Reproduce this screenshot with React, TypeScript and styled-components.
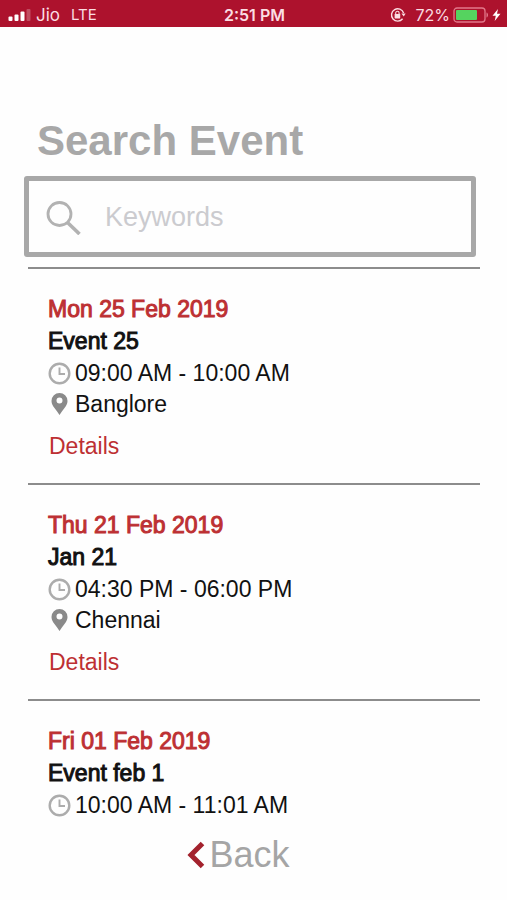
import React from "react";
import styled, { createGlobalStyle } from "styled-components";

const GlobalStyle = createGlobalStyle`
  * { box-sizing: border-box; }
  body {
    margin: 0;
    background: #fefefe;
    color: #111111;
    font-family: "Liberation Sans", Arial, Helvetica, sans-serif;
  }
`;

const Screen = styled.div`
  display: flex;
  flex-direction: column;
  height: 100vh;
`;

const StatusBar = styled.header`
  display: grid;
  grid-template-columns: 1fr auto 1fr;
  align-items: center;
  flex: none;
  height: 27px;
  padding: 2px 6px 0 8px;
  background: #ad122d;
  color: #fbdde2;
  font-family: Inter, sans-serif;
  font-size: 16px;
  line-height: 24px;
`;

const StatusGroup = styled.div<{ $end?: boolean }>`
  display: flex;
  align-items: center;
  justify-content: ${(p) => (p.$end ? "flex-end" : "flex-start")};
  gap: ${(p) => (p.$end ? "3px" : "4px")};
`;

const Carrier = styled.span`
  font-size: 17px;
`;

const Network = styled.span`
  margin-left: 7px;
  font-size: 15px;
`;

const Clock = styled.time`
  font-weight: 600;
`;

const Percent = styled.span`
  margin-left: 6px;
`;

const Main = styled.main`
  display: flex;
  flex-direction: column;
  flex: 1;
  min-height: 0;
  padding: 90px 27px 0 28px;
`;

const Title = styled.h1`
  margin: 0 9px 11px;
  color: #a8a8a8;
  font-size: 42px;
  line-height: 48px;
  font-weight: 700;
`;

const SearchBox = styled.label`
  display: flex;
  align-items: center;
  flex: none;
  gap: 23px;
  height: 81px;
  margin: 0 4px 10px -4px;
  padding: 0 17px;
  border: 5px solid #a8a8a8;
  border-radius: 3px;
`;

const SearchInput = styled.input`
  flex: 1;
  min-width: 0;
  padding: 0;
  border: 0;
  outline: 0;
  background: transparent;
  color: #111111;
  font: 27px/32px "Liberation Sans", Arial, sans-serif;
  &::placeholder {
    color: #cbcbcf;
    opacity: 1;
  }
`;

const EventList = styled.ul`
  flex: 1;
  min-height: 0;
  margin: 0;
  padding: 0;
  overflow: hidden;
  list-style: none;
`;

const EventItem = styled.li`
  padding: 24px 20px 22px;
  border-top: 2px solid #8c8c8c;
  font-size: 23px;
  line-height: 32px;
`;

const EventDate = styled.p`
  margin: 0;
  color: #bd3033;
  -webkit-text-stroke: 1px #bd3033;
`;

const EventName = styled.h2`
  margin: 0;
  font-size: 23px;
  font-weight: 400;
  -webkit-text-stroke: 1px #111111;
`;

const InfoRow = styled.div`
  display: flex;
  align-items: center;
  gap: 4px;
`;

const PlaceRow = styled(InfoRow)`
  line-height: 30px;
`;

const DetailsLink = styled.a`
  display: block;
  width: fit-content;
  margin-top: 12px;
  padding-left: 1px;
  color: #bd3033;
  line-height: 30px;
  text-decoration: none;
`;

const Footer = styled.footer`
  display: flex;
  justify-content: center;
  flex: none;
  height: 80px;
  padding: 13px 30px 0 0;
`;

const BackButton = styled.button`
  display: flex;
  align-items: center;
  gap: 3px;
  height: 44px;
  padding: 0;
  border: 0;
  background: none;
  color: #a5a5a5;
  font: 36px/44px "Liberation Sans", Arial, sans-serif;
  cursor: pointer;
`;

const SignalIcon = () => (
  <svg width="24" height="14" viewBox="0 0 24 14" fill="#ffffff" aria-hidden="true">
    <rect x="0.500" y="8.500" width="4" height="4.500" rx="1" />
    <rect x="6.500" y="6.500" width="4" height="6.500" rx="1" />
    <rect x="12.500" y="3.500" width="4" height="9.500" rx="1" />
    <rect x="18.500" y="1" width="4" height="12" rx="1" opacity="0.25" />
  </svg>
);

const RotationLockIcon = () => (
  <svg width="16" height="16" viewBox="0 0 16 16" fill="none" stroke="#fbdde2" aria-hidden="true">
    <path d="M12.6 11.8A6.2 6.2 0 1 1 13.6 6" strokeWidth="1.4" />
    <path d="M11.4 6.5h4.2l-1.8 3z" fill="#fbdde2" stroke="none" />
    <path d="M5.7 7.5V6a1.7 1.7 0 0 1 3.4 0v1.5" strokeWidth="1.1" />
    <rect x="4.6" y="7" width="5.6" height="4.4" rx="0.6" fill="#fbdde2" stroke="none" />
  </svg>
);

const BatteryIcon = () => (
  <svg width="36" height="16" viewBox="0 0 36 16" aria-hidden="true">
    <rect x="1" y="1" width="31" height="14" rx="3" fill="none" stroke="#e2788a" strokeWidth="1.3" />
    <rect x="3" y="3" width="21" height="10" rx="1" fill="#55d35f" />
    <path d="M33.5 5.5c2 .5 2 4.500 0 5z" fill="#e2788a" />
  </svg>
);

const BoltIcon = () => (
  <svg width="9" height="14" viewBox="0 0 9 14" fill="#ffffff" aria-hidden="true">
    <path d="M6 1 .5 7.800h3.300L2.700 13 8.500 5.800H5z" />
  </svg>
);

const SearchIcon = () => (
  <svg width="36" height="36" viewBox="0 0 36 36" fill="none" stroke="#b2b2b2" aria-hidden="true">
    <circle cx="13.500" cy="15" r="11.500" strokeWidth="2.800" />
    <path d="M21.500 23.500 33.500 35" strokeWidth="3.600" />
  </svg>
);

const TimeIcon = () => (
  <svg width="23" height="23" viewBox="0 0 23 23" fill="none" stroke="#acacac" aria-hidden="true">
    <circle cx="11.500" cy="11.500" r="9.800" strokeWidth="2.400" />
    <path d="M11.500 5.500V12H17" strokeWidth="1.900" />
  </svg>
);

const PlaceIcon = () => (
  <svg width="23" height="23" viewBox="0 0 23 23" aria-hidden="true">
    <path
      d="M11.500 0a8 8 0 0 0-8 8c0 2.600 1.400 4.900 3 7.100 1.700 2.300 3.600 4.500 5 7 1.400-2.500 3.300-4.700 5-7 1.600-2.200 3-4.500 3-7.100a8 8 0 0 0-8-8zm0 4.500a3 3 0 1 1 0 6 3 3 0 0 1 0-6z"
      fill="#8a8a8a"
    />
  </svg>
);

const BackIcon = () => (
  <svg width="19" height="28" viewBox="0 0 19 28" fill="none" stroke="#a3222d" aria-hidden="true">
    <path d="M15.500 2.500 4 14 15.500 25.500" strokeWidth="5" />
  </svg>
);

type EventData = { date: string; name: string; time: string; place?: string };

const events: EventData[] = [
  { date: "Mon 25 Feb 2019", name: "Event 25", time: "09:00 AM - 10:00 AM", place: "Banglore" },
  { date: "Thu 21 Feb 2019", name: "Jan 21", time: "04:30 PM - 06:00 PM", place: "Chennai" },
  { date: "Fri 01 Feb 2019", name: "Event feb 1", time: "10:00 AM - 11:01 AM" },
];

export default function App() {
  return (
    <>
      <GlobalStyle />
      <Screen>
        <StatusBar>
          <StatusGroup>
            <SignalIcon />
            <Carrier>Jio</Carrier>
            <Network>LTE</Network>
          </StatusGroup>
          <Clock>2:51 PM</Clock>
          <StatusGroup $end>
            <RotationLockIcon />
            <Percent>72%</Percent>
            <BatteryIcon />
            <BoltIcon />
          </StatusGroup>
        </StatusBar>
        <Main>
          <Title>Search Event</Title>
          <SearchBox>
            <SearchIcon />
            <SearchInput type="search" placeholder="Keywords" aria-label="Keywords" />
          </SearchBox>
          <EventList>
            {events.map((event) => (
              <EventItem key={event.date}>
                <EventDate>{event.date}</EventDate>
                <EventName>{event.name}</EventName>
                <InfoRow>
                  <TimeIcon />
                  <span>{event.time}</span>
                </InfoRow>
                {event.place && (
                  <>
                    <PlaceRow>
                      <PlaceIcon />
                      <span>{event.place}</span>
                    </PlaceRow>
                    <DetailsLink href="#details">Details</DetailsLink>
                  </>
                )}
              </EventItem>
            ))}
          </EventList>
        </Main>
        <Footer>
          <BackButton type="button">
            <BackIcon />
            Back
          </BackButton>
        </Footer>
      </Screen>
    </>
  );
}
